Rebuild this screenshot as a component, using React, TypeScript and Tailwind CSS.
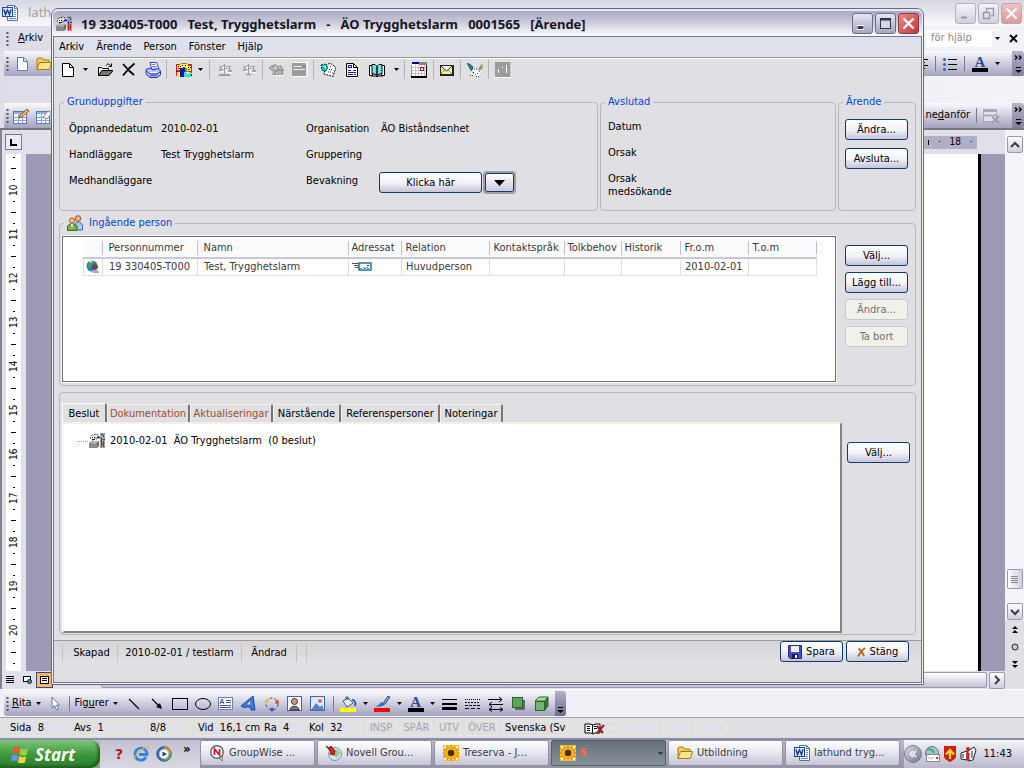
import type { ReactNode } from 'react';

const UI = "font-['DejaVu_Sans_Condensed','Noto_Sans',sans-serif]";

/* ---------- small drawings ---------- */

function Svg({ w = 16, h = 16, children }: { w?: number; h?: number; children: ReactNode }) {
  return (
    <svg width={w} height={h} viewBox={`0 0 ${w} ${h}`} fill="none" className="shrink-0" aria-hidden="true">
      {children}
    </svg>
  );
}

const Caret = () => (
  <Svg w={5} h={3}>
    <path d="M0 0h5L2.500 3z" fill="#000" />
  </Svg>
);

const WordIcon = () => (
  <Svg>
    <path d="M5.500.5h7l3 3v12h-10z" fill="#fff" stroke="#4a6fae" />
    <path d="M12.500.5v3h3" stroke="#4a6fae" />
    <path d="M7 13.500h7M11 11.500h3M12 9.500h2M12 7.500h2M12 5.500h2" stroke="#5f86c8" />
    <rect x=".5" y="2.500" width="10" height="9" fill="#dce8fa" stroke="#1d4a9c" />
    <path d="M2 4.500l1.500 5L5.500 5l2 4.500L9 4.500" stroke="#1d3f94" strokeWidth="1.500" />
  </Svg>
);

const CaseIcon = () => (
  <Svg>
    <path d="M0 9.500h8V15H0z" fill="#8b8b8b" />
    <path d="M0 9.500L2 8h8l-2 1.500z" fill="#b4b4b4" />
    <path d="M8 9.500L10 8v5l-2 2z" fill="#6c6c6c" />
    <path d="M5.500 10.500h1" stroke="#ddd" />
    <circle cx="4" cy="4.500" r="2.500" fill="#fff" stroke="#333" strokeDasharray="2 1" />
    <path d="M5 2c1-2 3-1 4 0s0 4-2 4" fill="#e4e4e4" stroke="#333" strokeDasharray="2 1" />
    <path d="M3 4.500h1M5 4.500h1M3 6.500h3" stroke="#222" />
    <path d="M8 4.500h3" stroke="#1212d0" strokeWidth="1.500" />
    <rect x="11" y="0" width="5" height="15" fill="#a4a4a4" />
    <path d="M12 1h2v1h-2zM14 2h1v2h-1z" fill="#444" />
    <path d="M12.500 5v3M14 6.500h2" stroke="#1a2fd0" />
    <path d="M12.500 8v6M14.500 8v6M12 11h3" stroke="#e01010" />
  </Svg>
);

const PageIcon = () => (
  <Svg>
    <path d="M2.500 1.500h7l4 4v9h-11z" fill="#fff" stroke="#000" />
    <path d="M9.500 1.500v4h4" stroke="#000" />
  </Svg>
);

const OpenIcon = () => (
  <Svg>
    <path d="M1.500 13.500v-8h3l1 1h6v2" fill="#e6e6de" stroke="#000" />
    <path d="M1.500 13.500L5 8.500h11l-4 5z" fill="#77776f" stroke="#000" />
    <path d="M9 3.500c1-2 3-2 5 .5M14.500 1.500v3h-3" stroke="#000" />
  </Svg>
);

const CrossIcon = () => (
  <Svg>
    <path d="M2 2l7 7.500 4 3.500M13.500 1.500L8 6.500 2 13.500" stroke="#000" strokeWidth="1.800" />
  </Svg>
);

const PrinterIcon = () => (
  <Svg>
    <path d="M5 .5h6.500l2.500 6-7 1.500z" fill="#fff" stroke="#3a4ac4" />
    <path d="M6.500 2.500h4M7 4.500h5M7.500 6h4" stroke="#7f8fe0" />
    <path d="M1 7.500L5 6l3 2 5-1.500 2.500 2.500v4l-3.500 2.500H5L1 12z" fill="#b8c8f6" stroke="#2434b8" />
    <path d="M1.500 9l3.500 3h7l3.500-2.500" stroke="#2434b8" />
    <path d="M5 13.500h7" stroke="#5a6ad8" strokeWidth="1.500" />
    <path d="M5 10.500h7" stroke="#fff" />
    <path d="M12.500 12.500h1.500" stroke="#3adf50" />
  </Svg>
);

const PeopleIcon = () => (
  <Svg>
    <g shapeRendering="crispEdges">
      <rect x="0" y="2" width="4" height="12" fill="#e21b1b" />
      <rect x="1" y="3" width="4" height="5" fill="#ffee38" />
      <rect x="5" y="1" width="6" height="2" fill="#8a8a1a" />
      <rect x="5" y="2" width="6" height="4" fill="#fff04a" />
      <rect x="4" y="6" width="5" height="9" fill="#1414a8" />
      <rect x="1" y="10" width="3" height="5" fill="#ffee38" />
      <rect x="9" y="6" width="3" height="4" fill="#1fb53a" />
      <rect x="12" y="2" width="4" height="9" fill="#e21b1b" />
      <rect x="11" y="4" width="4" height="5" fill="#fff04a" />
      <rect x="8" y="10" width="7" height="5" fill="#29e3f0" />
      <path d="M9 10h5l-2 2h-1z" fill="#fff04a" />
      <path d="M2 4h1v1H2zM4 4h1v1H4zM6 3h1v1H6zM9 3h1v1H9zM12 5h1v1h-1zM14 5h1v1h-1zM0 9h1v1H0zM15 12h1v2h-1z" fill="#000" />
      <path d="M2 6h2v1H2zM7 5h2v1H7zM12 7h2v1h-2z" fill="#d02010" />
    </g>
  </Svg>
);

const ScaleIcon = ({ base }: { base?: boolean }) => (
  <Svg>
    <path d="M4 5.500h10M9 3v10M3 9.500h4M11 10.500h4" stroke="#fff" />
    <path d="M3 4.500h3l1.500-2L9 4.500h5M7.500 3v9M8 6.500h2" stroke="#9c9c9c" />
    <path d="M3.500 5v2M12.500 5v3M2 8h4M11 9h4" stroke="#9c9c9c" strokeWidth="1.500" />
    {base ? <path d="M3 12h9l2 2H1z" fill="#9c9c9c" /> : <path d="M5 12.500h5" stroke="#9c9c9c" strokeWidth="1.500" />}
  </Svg>
);

const GreyPeopleIcon = () => (
  <Svg>
    <path d="M1 7c0-3 2-4 4-4l2-1 3 2 3-1 3 5v5H4V9z" fill="#9c9c9c" />
    <path d="M3 5l2 2M7 4v4l2-3M11 5l2 2M5 9v3M8 10l2 2M12 9v3M3 7l-1 1" stroke="#e8e8ea" />
    <path d="M5 13.500h11V9" stroke="#fff" />
  </Svg>
);

const GreyCardIcon = () => (
  <Svg>
    <path d="M2 0h14v14h-1V2H2z" fill="#fff" />
    <rect x="0" y="1" width="14" height="13" rx="1" fill="#9c9c9c" />
    <path d="M2 4.500h8M1 7.500h12" stroke="#ececee" />
    <path d="M10 4.500h3" stroke="#777" />
    <path d="M1 14.500h14" stroke="#fff" />
  </Svg>
);

const NoteIcon = () => (
  <Svg>
    <path d="M5.500 3.500L10 1l6 4.500-3 9L4 12z" fill="#fff" stroke="#000" strokeDasharray="2 1" />
    <path d="M10 5h2M9 7.500h4M8 10h3M12 11h1" stroke="#333" strokeDasharray="1 1" />
    <path d="M1 3l4-1 3 3-2 4-4-1z" fill="#18c4d0" stroke="#033" strokeDasharray="2 1" />
    <path d="M3.500 4.500h2v2" stroke="#fff" />
  </Svg>
);

const DocIcon = () => (
  <Svg>
    <rect width="16" height="16" fill="#e6e6d8" />
    <path d="M2.500 1.500h7l4 4v9h-11z" fill="#fff" stroke="#000" />
    <path d="M9.500 1.500v4h4" stroke="#000" />
    <rect x="4.500" y="3.500" width="3" height="2" stroke="#1a1ae0" />
    <path d="M4 8.500h3M9 8.500h3M4 10.500h8M4 12.500h5M10 12.500h2" stroke="#1a1ae0" />
  </Svg>
);

const BookIcon = () => (
  <Svg>
    <path d="M.5 3.500h3v10h-3zM12.500 3.500h3v10h-3z" fill="#fff" stroke="#000" />
    <path d="M3 2.500h3l2 2v9l-2-1.500H3zM13 2.500h-3l-2 2v9l2-1.500h3z" fill="#8ff2f2" stroke="#000" />
    <path d="M4.500 4v7M6.500 5v6M9.500 5v6M11.500 4v7" stroke="#20d0d8" strokeDasharray="1 1" />
    <path d="M2 14h5l1 1 1-1h5" stroke="#000" />
  </Svg>
);

const CalendarIcon = () => (
  <Svg>
    <rect x="0" y="2" width="15" height="13" fill="#fff" />
    <path d="M1 5.500h14M1 8.500h14M1 11.500h14M4.500 3v11M7.500 3v11M10.500 3v11M13.500 3v11" stroke="#c4c4c4" />
    <path d="M.5 3v12" stroke="#999" />
    <path d="M15.500 0v16" stroke="#000" />
    <rect x="1" y="0" width="7" height="2" fill="#00008c" />
    <rect x="8" y="0" width="8" height="3" fill="#858585" />
    <rect x="9.500" y="5.500" width="3" height="3" fill="#fff" stroke="#b01010" />
    <path d="M0 15h16" stroke="#000" strokeWidth="2" />
  </Svg>
);

const MailIcon = () => (
  <Svg>
    <rect x="1" y="3" width="14" height="11" fill="#222" />
    <rect x="2" y="4" width="11" height="8" fill="#f6f0a0" />
    <path d="M2 4l5.500 5L13 4z" fill="#fff" />
    <path d="M2 4l5.500 5L13 4" stroke="#222" />
    <path d="M2 12l4-4M13 12L9 8" stroke="#a09830" />
  </Svg>
);

const HandshakeIcon = () => (
  <Svg>
    <path d="M.5 1.500h1l4 3v3h-2z" fill="#129aa6" stroke="#05555c" />
    <path d="M15.500 1.500v5l-3 2-1-2z" fill="#8c8c8c" />
    <path d="M5 8l3-2 4 3 2 2-3 3H7l-3-3z" fill="#fff" />
    <path d="M4 8l2 3 3 2M7 7h3l3 3M3 13.500h3M9 14.500h4M6 10.500h1M10 11.500h2" stroke="#444" strokeDasharray="1 1" />
    <path d="M13 2.500h2" stroke="#e6d81f" />
  </Svg>
);

const GreyBoxIcon = () => (
  <Svg>
    <rect width="16" height="15" fill="#9c9c9c" />
    <path d="M3.500 7v4M7.500 5v1M11.500 3v8" stroke="#fff" />
    <path d="M0 15.500h16V1" stroke="#fff" />
  </Svg>
);

const FamilyIcon = () => (
  <Svg>
    <circle cx="11" cy="3.500" r="2.800" fill="#f0b483" stroke="#a8541a" />
    <path d="M8 15V9l2-2h3l2.500 3v5z" fill="#a6cdf5" stroke="#3c6fb8" />
    <circle cx="5" cy="5.500" r="2.600" fill="#f3c095" stroke="#a8541a" />
    <path d="M.5 15.500V11l2.500-2h4l3 2v4.500z" fill="#7fb04a" stroke="#3a6a1c" />
    <path d="M4 9l1 5 1-5" fill="#fff" />
  </Svg>
);

const GlobeIcon = () => (
  <Svg w={14} h={14}>
    <circle cx="6" cy="6" r="5.500" fill="#2a78d8" />
    <path d="M2 3c2-2 4-2 6-1L6 5 4 8 1 7z" fill="#3ba648" />
    <path d="M3 2c1-1 3-1.500 4-1L5 3z" fill="#bfe4ff" />
    <circle cx="9" cy="7" r="2.800" fill="#8a3d24" />
    <path d="M6 12c0-3 6-3 7 0v1H7z" fill="#8fb0e8" />
  </Svg>
);

const LetterIcon = () => (
  <Svg w={20} h={10}>
    <path d="M0 1.500h7M2 3.500h5M3 5.500h4" stroke="#555" />
    <rect x="7" y="1" width="12" height="7" fill="#fff" stroke="#2273a6" strokeWidth="1.500" />
    <path d="M15 3.500h2" stroke="#222" />
    <path d="M8 6.500h2M11 5.500h5M12 6.500h5" stroke="#67a89c" strokeDasharray="2 1" />
  </Svg>
);

const SaveIcon = () => (
  <Svg w={14} h={14}>
    <path d="M.5.5h13v13H2l-1.500-1.500z" fill="#4450c0" stroke="#262e8c" />
    <rect x="3" y="1" width="8" height="6" fill="#f4f6ff" />
    <rect x="4" y="9" width="6" height="5" fill="#1b1f4c" />
    <rect x="7" y="10" width="2" height="3" fill="#fff" />
  </Svg>
);

const BrownX = () => (
  <Svg w={9} h={10}>
    <path d="M1.500 1.500C4 4 6 6 7 9M8 1C5 3 3 6 1 9.500" stroke="#b06a10" strokeWidth="1.800" />
  </Svg>
);

const TableEdit = ({ eraser }: { eraser?: boolean }) => (
  <Svg>
    <rect x=".5" y="3.500" width="13" height="12" fill="#fff" stroke="#5577b8" />
    <rect x="1" y="4" width="12" height="2" fill="#8fb0e6" />
    <path d="M1 9.500h12M1 12.500h12M5.500 6v9M9.500 6v9" stroke="#8aa4d8" />
    {eraser ? <path d="M7 9l5-6 4 2-5 6z" fill="#f4f4fa" stroke="#888" /> : <path d="M6 10l1-3 7-6 2 2-7 6z" fill="#f4b54a" stroke="#8a5a1a" />}
  </Svg>
);

const WinFlag = () => (
  <Svg w={19} h={18}>
    <path d="M2 3c2-2 4-2 6.500-.5L7 9C5 7.500 3 7.500 1 9z" fill="#ee5a2b" />
    <path d="M9.500 3c2 1.500 5 1.500 7.500.2L15.500 10c-2 1.200-5 1-7-.4z" fill="#8fd14c" />
    <path d="M.8 10.500c2-1.500 4-1.300 6 0L6 16.500c-2-1.500-4-1.500-6 0z" fill="#5a98fa" />
    <path d="M8.200 11c2 1.500 5 1.500 7 .3l-1.400 6.200c-2 1-5 1-7-.3z" fill="#fdd03c" />
  </Svg>
);

const IeIcon = () => (
  <Svg>
    <path d="M13 11c-1 2-3 3.200-5 3.200A6 6 0 1 1 14 8.500H6" stroke="#2b86dc" strokeWidth="2.800" />
    <path d="M5 5c1-1.500 4-1.500 5 0" stroke="#9bd2ff" />
    <path d="M2 14c-3 0 3-9 9-12 3-1.500 5-1.500 4 1" stroke="#e6b733" strokeWidth="1.200" />
  </Svg>
);

const MediaIcon = () => (
  <Svg>
    <circle cx="8" cy="8" r="7.300" fill="#2b67c8" stroke="#555d78" />
    <path d="M8 1a7 7 0 0 1 7 7h-3a4 4 0 0 0-4-4z" fill="#f08a24" />
    <path d="M15 8a7 7 0 0 1-7 7v-3a4 4 0 0 0 4-4z" fill="#4fae3c" />
    <circle cx="8" cy="8" r="4.800" fill="#fff" stroke="#9bb" />
    <path d="M6.500 5.500L11 8l-4.500 2.500z" fill="#1a3fa0" />
  </Svg>
);

const GroupWise = () => (
  <Svg>
    <path d="M9 12l4 4v-5z" fill="#fff" stroke="#666" />
    <circle cx="8" cy="7" r="6.300" fill="#fff" stroke="#666" strokeWidth="1.400" />
    <path d="M5.500 10V4l5 6V4" stroke="#d0202c" strokeWidth="1.800" />
  </Svg>
);

const NovellIcon = () => (
  <Svg>
    <circle cx="9" cy="9" r="6.500" fill="#cfe6f0" stroke="#7a94a4" />
    <path d="M8 5c3-1 5 0 6 3l-3 5-3-2z" fill="#9cc98a" />
    <path d="M0 1l3 2 2-2 4 5-1 4-4-1 1-2z" fill="#d42a1a" stroke="#8a1208" />
  </Svg>
);

const Sunflower = () => (
  <Svg>
    <rect x=".5" y=".5" width="15" height="15" fill="#fff6c8" stroke="#f2c230" />
    <path
      d="M8 0l1.500 3L12 1l.2 3.200L15.500 4l-1.800 2.700L16 8l-2.300 1.500L15.500 12l-3.300-.2L12 15l-2.500-2L8 16l-1.500-3L4 15l-.2-3.200L.5 12l1.800-2.500L0 8l2.300-1.300L.5 4l3.300.2L4 1l2.500 2z"
      fill="#fbb400"
      stroke="#e88a00"
    />
    <circle cx="8" cy="8" r="3.200" fill="#4a2a08" />
  </Svg>
);

const FolderIcon = () => (
  <Svg>
    <path d="M1 13.500V3l1-1h4l1.500 2H13v2.500" fill="#f6cf54" stroke="#a87c12" />
    <path d="M1 13.500L3.500 6.500H15.500L13.500 13.500z" fill="#fde58a" stroke="#a87c12" />
  </Svg>
);

/* ---------- shared controls ---------- */

function XpButton({ children, disabled, extra = 'w-[63px]' }: { children: ReactNode; disabled?: boolean; extra?: string }) {
  const look = disabled
    ? 'border-[#c9c8c4] bg-[#f1f1ec] text-[#6f6f6f]'
    : 'border-[#0f3a6e] bg-linear-to-b from-white via-[#f3f3f8] to-[#c6c4da] text-black';
  return (
    <button
      type="button"
      disabled={disabled}
      className={`flex h-[21px] shrink-0 items-center justify-center gap-1 whitespace-nowrap rounded-[3px] border text-[11px] leading-none ${extra} ${look}`}
    >
      {children}
    </button>
  );
}

const Sep = ({ w }: { w: string }) => (
  <span className={`flex h-[19px] shrink-0 justify-center ${w}`}>
    <span className="w-px bg-[#b5b3ba]" />
  </span>
);

function Tool({ w, label, children }: { w: string; label: string; children: ReactNode }) {
  return (
    <button type="button" aria-label={label} className={`flex h-5 shrink-0 items-center justify-center ${w}`}>
      {children}
    </button>
  );
}

/* ---------- case window ---------- */

function CaseToolbar() {
  return (
    <div className="flex h-[22px] shrink-0 items-center border-t border-white pl-1">
      <Tool w="w-[19px]" label="Ny"><PageIcon /></Tool>
      <Tool w="w-4" label="Ny meny"><Caret /></Tool>
      <Tool w="w-6" label="Öppna"><OpenIcon /></Tool>
      <Tool w="w-[23px]" label="Ta bort rad"><CrossIcon /></Tool>
      <Tool w="w-[25px]" label="Skriv ut"><PrinterIcon /></Tool>
      <Sep w="w-[3px]" />
      <Tool w="w-7 pl-1" label="Personer"><PeopleIcon /></Tool>
      <Tool w="w-[9px]" label="Personer meny"><Caret /></Tool>
      <Sep w="w-2" />
      <Tool w="w-[23px]" label="Beslut"><ScaleIcon base /></Tool>
      <Tool w="w-[25px]" label="Väg"><ScaleIcon /></Tool>
      <Sep w="w-[3px]" />
      <Tool w="w-6" label="Grupp"><GreyPeopleIcon /></Tool>
      <Tool w="w-6" label="Kort"><GreyCardIcon /></Tool>
      <Sep w="w-[3px]" />
      <Tool w="w-[25px]" label="Anteckning"><NoteIcon /></Tool>
      <Tool w="w-6" label="Dokument"><DocIcon /></Tool>
      <Tool w="w-[26px]" label="Journal"><BookIcon /></Tool>
      <Tool w="w-3" label="Journal meny"><Caret /></Tool>
      <Sep w="w-1" />
      <Tool w="w-[25px]" label="Kalender"><CalendarIcon /></Tool>
      <Sep w="w-1" />
      <Tool w="w-6" label="Meddelande"><MailIcon /></Tool>
      <Sep w="w-[3px]" />
      <Tool w="w-[25px]" label="Kontakt"><HandshakeIcon /></Tool>
      <Sep w="w-[3px]" />
      <Tool w="w-[25px]" label="Avsluta fönster"><GreyBoxIcon /></Tool>
    </div>
  );
}

const fieldset = 'min-w-0 rounded-[4px] border border-[#bab6bd]';
const legend = 'ml-1 px-[3px] text-[11px] leading-[14px] text-[#0046d5]';

const columns: [string, string, string, string][] = [
  ['', 'w-[19px]', '', ''],
  ['Personnummer', 'w-[95px]', '19 330405-T000', 'pl-[6px]'],
  ['Namn', 'w-[151px]', 'Test, Trygghetslarm', 'pl-[6px]'],
  ['Adressat', 'w-[53px]', '', 'pl-[3px]'],
  ['Relation', 'w-[88px]', 'Huvudperson', 'pl-1'],
  ['Kontaktspråk', 'w-[75px]', '', 'pl-1'],
  ['Tolkbehov', 'w-[57px]', '', 'pl-[3px]'],
  ['Historik', 'w-[59px]', '', 'pl-[3px]'],
  ['Fr.o.m', 'w-[68px]', '2010-02-01', 'pl-1'],
  ['T.o.m', 'w-[68px]', '', 'pl-1'],
];

function PersonTable() {
  return (
    <table className="w-[734px] table-fixed border-collapse text-left text-[11px] text-[#3a3a3a]">
      <thead className="bg-[#fbfbfe]">
        <tr className="h-[19px] border-b-2 border-[#c8c8da]">
          {columns.map(([title, width, , pad]) => (
            <th key={title} className={`overflow-visible p-0 font-normal leading-[14px] ${width}`}>
              <div className={`h-[14px] whitespace-nowrap border-r border-[#c0c0d4] ${pad}`}>{title}</div>
            </th>
          ))}
        </tr>
      </thead>
      <tbody>
        <tr className="h-[17px]">
          {columns.map(([title, , value, pad]) => (
            <td key={title} className={`overflow-hidden whitespace-nowrap border border-[#dedee4] p-0 leading-[14px] ${pad}`}>
              {title === '' ? <span className="flex justify-center"><GlobeIcon /></span> : title === 'Adressat' ? <LetterIcon /> : value}
            </td>
          ))}
        </tr>
      </tbody>
    </table>
  );
}

const tabs: [string, string][] = [
  ['Dokumentation', 'w-[83px] text-[#98502c]'],
  ['Aktualiseringar', 'w-[83px] text-[#98502c]'],
  ['Närstående', 'w-[68px] text-black'],
  ['Referenspersoner', 'w-[99px] text-black'],
  ['Noteringar', 'w-[63px] text-black'],
];

function CaseWindow() {
  return (
    <section className="absolute top-2 right-[100px] bottom-[83px] left-[51px] flex flex-col rounded-t-[7px] border border-[#68688a] bg-[#f2f2f8]">
      <header className="mx-px flex h-[27px] shrink-0 items-center rounded-t-[6px] border-t-2 border-[#e8e8f0] bg-linear-to-b from-[#a9a8c4] via-[#cfcfdd] to-[#fcfcfe] pl-[3px]">
        <CaseIcon />
        <h1 className="ml-[9px] flex-1 overflow-hidden whitespace-pre font-['Noto_Sans',sans-serif] text-[13px] leading-5 font-bold text-[#16161c]">
          {'19 330405-T000   Test, Trygghetslarm   -   ÄO Trygghetslarm   0001565   [Ärende]'}
        </h1>
        <div className="flex gap-[2px] pr-[3px]">
          <button type="button" aria-label="Minimera" className="flex h-[21px] w-[21px] items-center justify-center rounded-[3px] border border-[#6c6c90] bg-linear-to-b from-[#e6e6f0] to-[#a6a5c2]">
            <Svg w={13} h={13}><path d="M1 10.500h7" stroke="#fff" strokeWidth="5" /><path d="M1.500 10.500h6" stroke="#3c3c5c" strokeWidth="3" /></Svg>
          </button>
          <button type="button" aria-label="Maximera" className="flex h-[21px] w-[21px] items-center justify-center rounded-[3px] border border-[#6c6c90] bg-linear-to-b from-[#e6e6f0] to-[#a6a5c2]">
            <Svg w={13} h={13}><rect x="1.500" y="1.500" width="10" height="10" fill="#d4d4e2" stroke="#33334f" /><path d="M1 2.500h11" stroke="#33334f" strokeWidth="2" /></Svg>
          </button>
          <button type="button" aria-label="Stäng fönster" className="flex h-[21px] w-[21px] items-center justify-center rounded-[3px] border border-[#8c3a44] bg-linear-to-br from-[#f0888a] to-[#bf3438]">
            <Svg w={13} h={13}><path d="M1.500 1.500l10 10M11.500 1.500l-10 10" stroke="#fff" strokeWidth="2.400" /></Svg>
          </button>
        </div>
      </header>

      <div className="mx-px mb-px flex min-h-0 flex-1 flex-col border border-[#74749a] bg-[#e0dfe3]">
        <nav className="flex h-[21px] shrink-0 items-center gap-3 border-b border-[#9a9a94] bg-[#dee1e9] pb-[2px] pl-[5px] text-[11px] leading-none">
          {['Arkiv', 'Ärende', 'Person', 'Fönster', 'Hjälp'].map((m) => (
            <button key={m} type="button">{m}</button>
          ))}
        </nav>
        <CaseToolbar />

        <div className="flex min-h-0 flex-1 flex-col px-[5px] pt-[15px]">
          <div className="flex h-[116px] shrink-0 gap-[2px] text-[11px]">
            <fieldset className={`${fieldset} flex-1`}>
              <legend className={legend}>Grunduppgifter</legend>
              <div className="grid auto-rows-[26px] grid-cols-[92px_145px_73px_1fr] items-center pt-[7px] pl-[9px] leading-[14px]">
                <span>Öppnandedatum</span><span>2010-02-01</span><span>Organisation</span><span className="pl-[2px]">ÄO Biståndsenhet</span>
                <span>Handläggare</span><span>Test Trygghetslarm</span><span>Gruppering</span><span />
                <span>Medhandläggare</span><span /><span>Bevakning</span>
                <span className="flex items-center gap-[3px] pt-[3px]">
                  <XpButton extra="w-[103px]">Klicka här</XpButton>
                  <button type="button" aria-label="Välj bevakning" className="flex h-[19px] w-[29px] items-center justify-center rounded-[2px] border border-[#0f3a6e] bg-linear-to-b from-white to-[#cbcadc] outline-2 outline-[#a09fa8]">
                    <Svg w={11} h={6}><path d="M0 0h11L5.500 6z" fill="#000" /></Svg>
                  </button>
                </span>
              </div>
            </fieldset>
            <fieldset className={`${fieldset} w-[236px]`}>
              <legend className={legend}>Avslutad</legend>
              <div className="flex flex-col gap-3 pt-[11px] pl-[7px] leading-[14px]">
                <span>Datum</span>
                <span>Orsak</span>
                <span className="leading-[13px]">Orsak<br />medsökande</span>
              </div>
            </fieldset>
            <fieldset className={`${fieldset} w-[78px]`}>
              <legend className={legend}>Ärende</legend>
              <div className="flex flex-col gap-2 pt-[10px] pl-[6px]">
                <XpButton>Ändra...</XpButton>
                <XpButton>Avsluta...</XpButton>
              </div>
            </fieldset>
          </div>

          <fieldset className={`${fieldset} mt-1 h-[171px] shrink-0`}>
            <legend className={`${legend} flex items-center gap-[6px]`}><FamilyIcon />Ingående person</legend>
            <div className="mt-[5px] flex">
              <div className="ml-[2px] h-[146px] min-w-0 flex-1 overflow-hidden border border-[#6e6e6e] bg-white pt-[2px] pl-5 outline-1 outline-[#f6f6fa]">
                <PersonTable />
              </div>
              <div className="flex w-[79px] flex-col gap-[6px] pt-[9px] pl-[9px]">
                <XpButton>Välj...</XpButton>
                <XpButton>Lägg till...</XpButton>
                <XpButton disabled>Ändra...</XpButton>
                <XpButton disabled>Ta bort</XpButton>
              </div>
            </div>
          </fieldset>

          <div className="mt-[6px] mb-[5px] flex min-h-0 flex-1 rounded-[4px] border border-[#bab6bd]">
            <div className="flex min-w-0 flex-1 flex-col pt-[10px] pb-px pl-[2px]">
              <div role="tablist" className="flex items-end text-[11px] leading-none">
                <button type="button" role="tab" aria-selected="true" className="-mb-px h-5 w-[45px] rounded-t-[2px] border-t border-r-2 border-l border-t-white border-r-[#77776f] border-l-white bg-[#e0dfe3]">Beslut</button>
                {tabs.map(([t, c]) => (
                  <button key={t} type="button" role="tab" aria-selected="false" className={`h-[18px] rounded-t-[2px] border-t border-r-2 border-l border-t-[#f3f1e4] border-r-[#77776f] border-l-[#f3f1e4] whitespace-nowrap ${c}`}>{t}</button>
                ))}
              </div>
              <div role="tabpanel" className="min-h-0 flex-1 border-2 border-t-[#f3f1e4] border-r-[#84847c] border-b-[#84847c] border-l-[#f8f8f8] bg-white p-px">
                <div className="flex items-center pt-2 pl-3 text-[11px]">
                  <span className="w-[11px] border-t border-dotted border-[#a0a0a0]" />
                  <span className="ml-px"><CaseIcon /></span>
                  <span className="ml-[5px] whitespace-pre">{'2010-02-01  ÄO Trygghetslarm  (0 beslut)'}</span>
                </div>
              </div>
            </div>
            <div className="w-[73px] pt-[49px] pl-[5px]">
              <XpButton>Välj...</XpButton>
            </div>
          </div>
        </div>

        <footer className="mb-[18px] flex h-[24px] shrink-0 items-start border-t border-[#9b9a9f] bg-linear-to-b from-[#d6d5da] to-[#e2e1e5] text-[11px]">
          <span className="mt-[3px] ml-2 flex h-[18px] w-[56px] items-center justify-center border-r border-l border-[#c9c5ad] pl-[3px]">Skapad</span>
          <span className="mt-[3px] flex h-[18px] w-[124px] items-center justify-center border-r border-[#c9c5ad]">2010-02-01 / testlarm</span>
          <span className="mt-[3px] flex h-[18px] w-[55px] items-center justify-center border-r border-[#c9c5ad]">Ändrad</span>
          <span className="mt-[3px] h-[18px] w-[10px] border-r border-[#c9c5ad]" />
          <span className="mr-3 ml-auto flex h-full gap-[3px] bg-[#e0dfe3]">
            <XpButton><SaveIcon />Spara</XpButton>
            <XpButton><BrownX />Stäng</XpButton>
          </span>
        </footer>
      </div>
    </section>
  );
}

/* ---------- word processor behind ---------- */

const Grip = () => (
  <Svg w={3} h={15}>
    <path d="M1.500 1v14" stroke="#55557a" strokeWidth="2" strokeDasharray="2 2" />
  </Svg>
);

const More = () => (
  <span className="flex h-full w-3 shrink-0 flex-col items-center justify-around rounded-r-[3px] bg-linear-to-b from-[#b4b2c8] to-[#8280a0]">
    <Svg w={8} h={5}><path d="M1 .5l2 2-2 2M5 .5l2 2-2 2" stroke="#000" strokeWidth="1.400" /></Svg>
    <Svg w={7} h={6}><path d="M1 .5h5" stroke="#000" /><path d="M0 3h7L3.500 6z" fill="#000" /></Svg>
  </span>
);

const bar = 'flex h-[25px] shrink-0 items-center bg-linear-to-b from-[#fafafd] to-[#a5a3bf]';

const rulerMarks = [10, 11, 12, 13, 14, 15, 16, 17, 18, 19, 20];

function WordTop() {
  return (
    <>
      <header className="flex h-[26px] shrink-0 items-center bg-linear-to-b from-[#d6d6e2] to-[#fafafd] pl-[2px]">
        <WordIcon />
        <span className="ml-[10px] flex-1 font-['Noto_Sans',sans-serif] text-[13px] text-[#a3a2a8]">lath</span>
        <span className="flex gap-[2px] pr-[2px]">
          {[
            ['Minimera Word', 'M2 10.500h6', '#9a9aac', 'from-[#f4f4f8] to-[#d0d0de] border-[#b0b0c0]'],
            ['Återställ Word', 'M4.500 5V1.500h7v7H9M1.500 5.500h6v6h-6z', '#9a9aac', 'from-[#f4f4f8] to-[#d0d0de] border-[#b0b0c0]'],
            ['Stäng Word', 'M1.500 1.500l10 10M11.500 1.500l-10 10', '#fff', 'from-[#ecc0c2] to-[#dd9a9c] border-[#c8a0a8]'],
          ].map(([l, d, s, c], i) => (
            <button key={l} type="button" aria-label={l} className={`flex h-[21px] w-[21px] items-center justify-center rounded-[3px] border bg-linear-to-b ${c}`}>
              <Svg w={13} h={13}><path d={d} stroke={s} strokeWidth={i === 1 ? 1.3 : 2.2} /></Svg>
            </button>
          ))}
        </span>
      </header>
      <div className="flex h-[25px] shrink-0 items-center bg-linear-to-r from-[#dddce8] to-[#f3f2f8] pl-[6px] text-[11px]">
        <Grip />
        <button type="button" className="ml-[9px] flex-1 text-left"><u>A</u>rkiv</button>
        <span className="flex h-[17px] w-[77px] items-center justify-between bg-white pl-[5px] text-[#8b8b8b]">för hjälp<span className="flex h-4 w-[11px] items-center justify-center bg-[#f2f1f6]"><Caret /></span></span>
        <button type="button" aria-label="Stäng dokument" className="px-[6px]"><Svg w={9} h={9}><path d="M1 1l7 7M8 1L1 8" stroke="#000" strokeWidth="1.800" /></Svg></button>
      </div>
      <div className={`${bar} ml-1 pl-[2px]`}>
        <Grip />
        <span className="ml-[5px] flex flex-1 gap-[6px]">
          <Svg><path d="M3.500 1.500h6l4 4v9h-10z" fill="#fff" stroke="#6080a8" /><path d="M9.500 1.500v4h4" stroke="#6080a8" /></Svg>
          <FolderIcon />
        </span>
        <span className="flex items-center gap-[7px] pr-2">
          <Svg w={10} h={12}><path d="M0 1.500h10M0 4.500h7M0 7.500h10M0 10.500h7" stroke="#000" /></Svg>
          <span className="h-[15px] w-px bg-[#77769a]" />
          <Svg w={14} h={14}><path d="M5 2.500h9M5 7.500h9M5 12.500h9" stroke="#000" /><circle cx="1.500" cy="2.500" r="1.500" fill="#2f62b4" /><circle cx="1.500" cy="7.500" r="1.500" fill="#2f62b4" /><circle cx="1.500" cy="12.500" r="1.500" fill="#2f62b4" /></Svg>
          <span className="h-[15px] w-px bg-[#77769a]" />
          <span className="flex w-4 flex-col items-center border-b-4 border-black font-['Liberation_Serif',serif] text-[15px] leading-[12px] font-bold text-[#2c4f8c]">A</span>
          <Caret />
        </span>
        <span className="ml-1 h-full"><More /></span>
      </div>
      <div className="h-[27px] shrink-0 bg-linear-to-r from-[#dddce8] to-[#f3f2f8]" />
      <div className={`${bar} ml-1 pl-[2px]`}>
        <Grip />
        <span className="ml-1 flex flex-1 gap-[7px]"><TableEdit /><TableEdit eraser /></span>
        <span className="flex items-center gap-[6px] pr-2 text-[11px]">
          <span className="whitespace-nowrap">ne<u>d</u>anför</span>
          <span className="h-[15px] w-px bg-[#77769a]" />
          <Svg w={17}><rect x=".5" y="1.500" width="13" height="12" fill="#e2e2ec" stroke="#a9a8bc" /><path d="M1 3h12M1 7.500h12" stroke="#a9a8bc" strokeWidth="2" /><path d="M9 9l7 6M16 8l-7 7" stroke="#9a99b0" strokeWidth="2" /></Svg>
        </span>
        <span className="ml-1 h-full"><More /></span>
      </div>
    </>
  );
}

function ScrollButton({ label, d }: { label: string; d: string }) {
  return (
    <button type="button" aria-label={label} className="flex h-[17px] w-4 shrink-0 items-center justify-center rounded-[2px] border border-[#9a99b4] bg-linear-to-b from-white to-[#cfcede]">
      <Svg w={10} h={10}><path d={d} stroke="#3c3c44" strokeWidth="2" /></Svg>
    </button>
  );
}

const Tick = ({ long }: { long?: boolean }) => (
  <span className="flex h-[11px] items-center"><span className={long ? 'h-px w-[5px] bg-black' : 'h-px w-[2px] bg-black'} /></span>
);

function WordDocument() {
  return (
    <div className="flex min-h-0 flex-1 border-t-2 border-[#77777c] bg-[#e0dfea]">
      <div className="flex min-w-0 flex-1 flex-col border-l-2 border-[#85848c]">
        <div className="flex h-6 shrink-0 items-center pl-[3px]">
          <button type="button" aria-label="Tabbtyp" className="flex h-4 w-[17px] items-center justify-center border border-[#77769a] bg-[#ececf2]">
            <Svg w={7} h={7}><path d="M1 0v6h6" stroke="#000" strokeWidth="2" /></Svg>
          </button>
          <span className="mr-7 ml-auto flex h-[13px] w-[53px] items-center justify-around bg-[#b1afc4] text-[10px] leading-none">
            <span className="h-[5px] w-px bg-black" /><span>·</span><span>18</span><span>·</span>
          </span>
        </div>
        <div className="flex min-h-0 flex-1">
          <div className="ml-1 w-[15px] overflow-hidden bg-white text-[10px] leading-none">
            <div className="-mt-[2px] flex flex-col items-center">
              {rulerMarks.map((n) => (
                <div key={n} className="flex w-full flex-col items-center">
                  <Tick /><Tick long /><Tick />
                  <span className="flex h-[11px] rotate-180 items-center justify-center [writing-mode:vertical-rl]">{n}</span>
                </div>
              ))}
              <Tick /><Tick long /><Tick />
            </div>
          </div>
          <div className="ml-[5px] flex flex-1 justify-end bg-[#9b99b3] pr-6">
            <div className="w-[860px] border-r-[3px] border-black bg-white" />
          </div>
        </div>
        <div className="flex h-[18px] shrink-0 items-center">
          <span className="flex w-[34px] justify-around">
            <Svg w={8} h={8}><path d="M0 .5h8M0 2.500h8M0 4.500h8M0 6.500h8" stroke="#000" /></Svg>
            <Svg w={9} h={8}><rect x=".5" y=".5" width="7" height="5" fill="#fff" stroke="#000" /><circle cx="6.500" cy="5.500" r="2" fill="#3a5" stroke="#115" /></Svg>
          </span>
          <span className="flex h-4 w-[17px] items-center justify-center border border-[#44447a] bg-[#fbb864]">
            <Svg w={9} h={8}><rect x=".5" y=".5" width="8" height="7" fill="#fff" stroke="#000" /><path d="M2 2.500h5M2 4.500h5" stroke="#000" /></Svg>
          </span>
          <span className="mr-[2px] ml-12 h-4 flex-1 rounded-[2px] border border-[#9a99b4] bg-linear-to-b from-white to-[#c2c1d4]" />
          <ScrollButton label="Rulla höger" d="M3 1l4 4-4 4" />
        </div>
      </div>
      <div className="flex w-[19px] shrink-0 flex-col items-center bg-[#f4f4fa] pt-[6px]">
        <ScrollButton label="Rulla upp" d="M1 7l4-4 4 4" />
        <span className="flex-1" />
        <span className="mb-[14px] flex h-5 w-4 flex-col items-center justify-center gap-px rounded-[2px] border border-[#9a99b4] bg-linear-to-r from-white to-[#cfcede]">
          <span className="h-px w-[7px] bg-[#8887a0]" /><span className="h-px w-[7px] bg-[#8887a0]" /><span className="h-px w-[7px] bg-[#8887a0]" /><span className="h-px w-[7px] bg-[#8887a0]" />
        </span>
        <ScrollButton label="Rulla ned" d="M1 3l4 4 4-4" />
        <span className="flex h-[69px] w-full flex-col items-center gap-[9px] bg-[#e0dfe6] pt-[6px]">
          <Svg w={6} h={8}><path d="M0 3h6L3 0zM0 7h6L3 4z" fill="#000" /></Svg>
          <Svg w={8} h={8}><circle cx="4" cy="4" r="3" fill="#ccc" stroke="#222" /></Svg>
          <Svg w={6} h={8}><path d="M0 1h6L3 4zM0 5h6L3 8z" fill="#000" /></Svg>
        </span>
      </div>
    </div>
  );
}

function DrawingBar() {
  return (
    <div className="flex h-7 shrink-0 items-center border-t border-white bg-[#f0eff6]">
      <div className={`${bar} ml-1 w-[562px] rounded-[3px] pl-[2px] text-[11px]`}>
        <Grip />
        <button type="button" className="ml-[3px] flex items-center gap-1"><span><u>R</u>ita</span><Caret /></button>
        <span className="ml-[10px]"><Svg w={9} h={15}><path d="M1 1v11l2.500-2.500L5.500 14l2-1-2-4H8.500z" fill="#fff" stroke="#60789c" /></Svg></span>
        <span className="ml-[9px] h-[15px] w-px bg-[#77769a]" />
        <button type="button" className="ml-[5px] flex items-center gap-1"><span>Fig<u>u</u>rer</span><Caret /></button>
        <div className="ml-2 flex items-center gap-[7px]">
          <Svg><path d="M3 3l10 10" stroke="#000" strokeWidth="1.300" /></Svg>
          <Svg><path d="M3 3l7 7" stroke="#000" strokeWidth="1.300" /><path d="M13 13l-6-2 4-4z" fill="#000" /></Svg>
          <Svg><rect x=".5" y="2.500" width="15" height="11" stroke="#000" /></Svg>
          <Svg><ellipse cx="8" cy="8" rx="7.500" ry="5.500" stroke="#000" /></Svg>
          <Svg><rect x=".5" y="1.500" width="14" height="12" fill="#fff" stroke="#6a80b0" /><path d="M2 8l2-5 2 5M3 6.500h2M8 4.500h5M8 6.500h5M2 9.500h11M2 11.500h11" stroke="#3c5488" /></Svg>
          <Svg><path d="M0 10L12 0l2 14h-4l-.5-3H5l-1 1z" fill="#3c78d8" stroke="#1c4a9c" /><path d="M6 8.500h3.500L9 5z" fill="#cfe0f8" /></Svg>
          <Svg><circle cx="8" cy="8" r="6" stroke="#555" strokeDasharray="3 2" /><circle cx="3" cy="5" r="2" fill="#e8c03c" /><circle cx="13" cy="6" r="2" fill="#d85a3c" /><circle cx="8" cy="13.500" r="2" fill="#3c5ad8" /></Svg>
          <Svg><rect x=".5" y=".5" width="14" height="14" fill="#fff" stroke="#3c68b0" /><circle cx="7.500" cy="5.500" r="3" fill="#d09a6a" stroke="#333" /><path d="M3 14c0-5 9-5 9 0z" fill="#7a7a80" stroke="#333" /></Svg>
          <Svg><rect x=".5" y=".5" width="14" height="14" fill="#dcecff" stroke="#3c68b0" /><circle cx="10" cy="5" r="2" fill="#e0704a" /><path d="M1 14l5-7 4 4 2-2 2 5z" fill="#5a82c4" /></Svg>
        </div>
        <span className="ml-[7px] h-[15px] w-px bg-[#77769a]" />
        <div className="ml-[6px] flex items-center gap-[6px]">
          <Svg w={17}><path d="M3 5l5-3 5 5-6 4z" fill="#e8eef8" stroke="#44547c" /><path d="M6 4V1h2v3" stroke="#44547c" /><path d="M12 4c3 0 4 3 3 6" stroke="#2c5cb8" strokeWidth="2" /><rect y="12" width="16" height="4" fill="#ff0" /></Svg>
          <Caret />
          <Svg w={17}><path d="M14 0l2 1-5 7-3 1z" fill="#88a8e0" stroke="#24488c" /><path d="M1 10c3 1 6 1 9-1l-2-3c-2 0-2 4-7 4z" fill="#3468c8" /><rect y="12" width="16" height="4" fill="#f00" /></Svg>
          <Caret />
          <span className="flex w-4 flex-col items-center border-b-4 border-black font-['Liberation_Serif',serif] text-[15px] leading-[12px] font-bold text-[#2c4f8c]">A</span>
          <Caret />
        </div>
        <div className="ml-[7px] flex items-center gap-[7px]">
          <Svg><path d="M0 3.500h15" stroke="#000" /><path d="M0 8h15" stroke="#000" strokeWidth="2" /><path d="M0 12.500h15" stroke="#000" strokeWidth="3" /></Svg>
          <Svg><path d="M0 3.500h15" stroke="#000" strokeDasharray="1 1" /><path d="M0 6.500h15" stroke="#000" strokeDasharray="2 1" /><path d="M0 9.500h15" stroke="#000" strokeDasharray="3 1" /><path d="M0 12.500h15" stroke="#000" strokeDasharray="4 2" /></Svg>
          <Svg><path d="M0 3.500h14M1 8.500h14M1 13.500h14M11 1l3 2.500L11 6M4 6L1 8.500 4 11M4 11.500l-3 2 3 2M12 11.500l3 2-3 2" stroke="#000" /></Svg>
          <Svg><rect x="4" y="4" width="10" height="10" fill="#666" /><rect x="1.500" y="1.500" width="10" height="10" fill="#5fa458" stroke="#2c6430" /></Svg>
          <Svg><path d="M1 5l4-4h9l-3 4z" fill="#b0dca8" stroke="#2c6430" /><path d="M11 5l3-4v9l-3 4z" fill="#3c7c3c" stroke="#2c6430" /><rect x="1.500" y="5.500" width="9" height="9" fill="#74b46c" stroke="#2c6430" /></Svg>
        </div>
        <span className="ml-auto flex h-full w-[11px] items-end justify-center rounded-r-[3px] bg-linear-to-b from-[#b4b2c8] to-[#6e6c8e] pb-[3px]">
          <Svg w={7} h={6}><path d="M1 .5h5" stroke="#000" /><path d="M0 3h7L3.500 6z" fill="#000" /></Svg>
        </span>
      </div>
    </div>
  );
}

const cell = 'ml-[5px] flex h-4 items-center border border-[#e9e7da]';

function StatusBar() {
  return (
    <div className="flex h-[21px] shrink-0 items-center border-t border-[#a4a3ac] bg-[#e0dfe3] text-[11px] whitespace-nowrap">
      <div className={`${cell} w-[185px] pl-1`}>
        <span className="w-16">Sida&nbsp; 8</span><span className="w-[76px]">Avs&nbsp; 1</span><span>8/8</span>
      </div>
      <div className={`${cell} w-[166px] pl-[2px]`}>
        <span className="w-[66px]">Vid&nbsp; 16,1 cm</span><span className="w-[45px]">Ra&nbsp; 4</span><span>Kol&nbsp; 32</span>
      </div>
      <span className={`${cell} w-[30px] justify-center text-[#a7a6ab]`}>INSP</span>
      <span className={`${cell} w-[31px] justify-center text-[#a7a6ab]`}>SPÅR</span>
      <span className={`${cell} w-6 justify-center text-[#a7a6ab]`}>UTV</span>
      <span className={`${cell} w-8 justify-center text-[#a7a6ab]`}>ÖVER</span>
      <span className={`${cell} w-[65px] pl-px`}>Svenska (Sv</span>
      <span className={`${cell} w-[43px] justify-center`}>
        <Svg w={21} h={13}><path d="M1 2h5l3 1 3-1h4v9h-5l-2 1-2-1H1z" fill="#fff" stroke="#000" /><path d="M8.500 3v8M3 4.500h3M3 6.500h3M3 8.500h3M10 4.500h3M10 6.500h3" stroke="#000" /><path d="M13 4l6 7M20 3l-7 8" stroke="#a01818" strokeWidth="2" /></Svg>
      </span>
      <span className={`${cell} w-[37px]`} /><span className={`${cell} w-[27px]`} /><span className={`${cell} w-[29px]`} />
    </div>
  );
}

/* ---------- taskbar ---------- */

const tasks: [string, ReactNode][] = [
  ['GroupWise ...', <GroupWise key="g" />],
  ['Novell Grou...', <NovellIcon key="n" />],
  ['Treserva - J...', <Sunflower key="t" />],
  ['5', <Sunflower key="s" />],
  ['Utbildning', <FolderIcon key="f" />],
  ['lathund tryg...', <WordIcon key="w" />],
];

function Taskbar() {
  return (
    <div className="flex h-[30px] shrink-0 items-stretch border-t-2 border-[#8c8ba8] bg-linear-to-b from-[#b9b8c8] to-[#94939f] text-[11px]">
      <button
        type="button"
        className="flex w-[100px] items-center gap-[5px] rounded-r-[10px] bg-linear-to-b from-[#7fc67a] via-[#3d9a3c] to-[#2c7d2c] pl-[11px] font-['Open_Sans',sans-serif] text-[17px] leading-none font-bold text-white italic shadow-[inset_-2px_-2px_3px_#1d5c1d]"
      >
        <WinFlag />
        Start
      </button>
      <div className="flex w-[100px] items-center gap-[7px] bg-linear-to-b from-[#c2c1d0] to-[#d9d8e2] pl-3">
        <span className="w-[14px] text-center font-['DejaVu_Sans',sans-serif] text-[14px] leading-none font-bold text-[#b01818]">?</span>
        <IeIcon />
        <MediaIcon />
        <span className="mb-3 ml-1 text-[13px] leading-none font-bold">»</span>
      </div>
      <div className="flex min-w-0 flex-1 gap-[2px] pb-[2px]">
        {tasks.map(([label, icon], i) => (
          <button
            key={label}
            type="button"
            className={
              i === 3
                ? 'flex w-[115px] items-center gap-1 rounded-[2px] border border-[#55606c] bg-linear-to-b from-[#67717c] to-[#87919a] pr-[2px] pl-2 font-bold text-[#ff7040]'
                : 'flex w-[115px] items-center gap-1 rounded-[2px] border border-[#9190ac] bg-linear-to-b from-white via-[#e6e6f0] to-[#c6c5d8] pl-2 whitespace-nowrap text-[#3a3a44]'
            }
          >
            {icon}
            {label}
            {i === 3 && <span className="ml-auto"><Svg w={5} h={3}><path d="M0 0h5L2.500 3z" fill="#333" /></Svg></span>}
          </button>
        ))}
      </div>
      <div className="flex w-[120px] shrink-0 items-center gap-[2px] bg-linear-to-b from-[#f4f4f9] to-[#b9b8cc]">
        <button type="button" aria-label="Visa dolda ikoner" className="flex h-[18px] w-[18px] items-center justify-center rounded-full border border-[#777690] bg-linear-to-br from-[#dddde8] to-[#77768e]">
          <Svg w={8} h={8}><path d="M4 1L1 4l3 3M7 1L4 4l3 3" stroke="#fff" strokeWidth="1.400" /></Svg>
        </button>
        <Svg><circle cx="8" cy="7" r="6.500" fill="#9cc4d0" stroke="#55808c" /><path d="M3 4c3-2 6 0 7 3" stroke="#5aa068" strokeWidth="2" /><rect x="2.500" y="8.500" width="13" height="7" fill="#fff" stroke="#888" /><path d="M4 12h6" stroke="#b8a888" /><path d="M12 12h2" stroke="#d22" strokeWidth="2" /></Svg>
        <Svg><path d="M2 0h12v10c0 3-3 4.500-6 6-3-1.500-6-3-6-6z" fill="#cf1c1c" /><path d="M8 13V5M4 8.500L8 4l4 4.500" stroke="#ffd820" strokeWidth="2.200" /></Svg>
        <Svg w={17}><path d="M1 7l6-2v9l-6-1zM8 5l6-4 2 3-3 10-5 1z" fill="#fff" stroke="#222" /><path d="M3 8v4M12 5v7" stroke="#222" /><path d="M8 7v7" stroke="#e01818" strokeWidth="3" /><circle cx="8" cy="3" r="2" fill="#e01818" /></Svg>
        <time className="mr-3 ml-auto text-[11px]">11:43</time>
      </div>
    </div>
  );
}

export default function App() {
  return (
    <main className={`relative flex h-screen min-h-[600px] w-full flex-col overflow-hidden bg-[#e0dfe3] text-black ${UI}`}>
      <WordTop />
      <WordDocument />
      <DrawingBar />
      <StatusBar />
      <Taskbar />
      <CaseWindow />
    </main>
  );
}
